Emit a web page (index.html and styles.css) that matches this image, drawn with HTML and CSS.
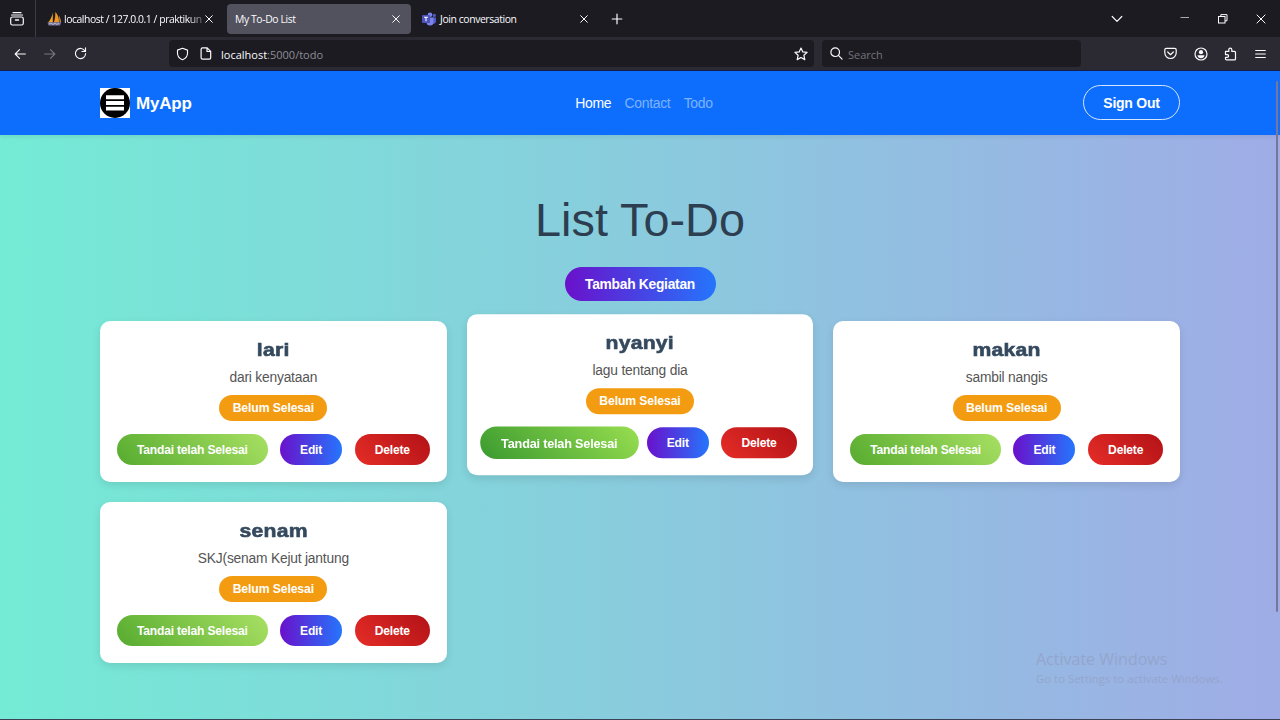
FILE: index.html
```html
<!DOCTYPE html>
<html lang="id">
<head>
<meta charset="utf-8">
<title>My To-Do List</title>
<link rel="stylesheet" href="styles.css">
</head>
<body>
<div class="tabbar">
  <div class="history"><svg class="ico" width="16" height="16" viewBox="0 0 16 16"><path d="M4 1.700h8M2.500 4h11"/><rect x="1.7" y="6" width="12.6" height="8" rx="1.8"/><path d="M6.500 9h3" stroke-width="1.5"/></svg></div>
  <div class="tab tab-first">
    <svg class="fav" width="15" height="14" viewBox="0 0 15 14"><path d="M5.800.5v10H1C3.600 8 5 4.500 5.800.5z" fill="#f5a623"/><path d="M8.200 0c2.800 2.500 4 6 3.800 10.500H6.800C8.200 6.500 8.500 3.500 8.200 0z" fill="#f0951c"/><path d="M12 3.500c1 2 1.800 4 2 7h-1.300z" fill="#d9a060"/><path d="M.5 10.200h13.700l-1.200 3.300H1.500z" fill="#77759b"/><path d="M2 12l2-1 2 1.500 2-1.500 2 1.500 2-1.500" fill="none" stroke="#c7c5dd" stroke-width=".8"/></svg>
    <span class="tab-title tab-fade">localhost / 127.0.0.1 / praktikun</span>
    <svg class="ico close" width="8" height="8" viewBox="0 0 8 8"><path d="M.7.7l6.600 6.600M7.300.7L.7 7.300"/></svg>
  </div>
  <div class="tab tab-active">
    <span class="tab-title">My To-Do List</span>
    <svg class="ico close" width="8" height="8" viewBox="0 0 8 8"><path d="M.7.7l6.600 6.600M7.300.7L.7 7.300"/></svg>
  </div>
  <div class="tab tab-teams">
    <svg class="fav" width="15" height="14" viewBox="0 0 15 14"><circle cx="8" cy="2.700" r="2.300" fill="#7b83eb"/><circle cx="12.300" cy="3.400" r="1.600" fill="#5059c9"/><path d="M10.500 5.500H14v4a2.500 2.500 0 0 1-3.500 2z" fill="#5059c9"/><path d="M4.500 5.500h7v4.500a3.500 3.500 0 0 1-7 0z" fill="#7b83eb"/><rect x="0" y="3" width="8" height="8" rx=".8" fill="#4b53bc"/><path d="M2 5.200h4M4 5.200V9.300" stroke="#fff" stroke-width="1.100"/></svg>
    <span class="tab-title">Join conversation</span>
    <svg class="ico close" width="8" height="8" viewBox="0 0 8 8"><path d="M.7.7l6.600 6.600M7.300.7L.7 7.300"/></svg>
  </div>
  <svg class="ico newtab" width="12" height="12" viewBox="0 0 12 12"><path d="M6 1.200v9.600M1.200 6h9.600"/></svg>
  <div class="window-controls">
    <svg class="ico" width="12" height="8" viewBox="0 0 12 8"><path d="M1.200 1.500L6 6.300l4.800-4.800"/></svg>
    <svg class="ico thin" width="10" height="10" viewBox="0 0 10 10"><path d="M.5 3.500h8.500" stroke="#aaa9af"/></svg>
    <svg class="ico thin" width="10" height="10" viewBox="0 0 10 10"><rect x=".5" y="2.500" width="6.500" height="6.500"/><path d="M2.800 2.500V.6h6.200v6.200H7"/></svg>
    <svg class="ico thin" width="10" height="10" viewBox="0 0 10 10"><path d="M.7.7l8.600 8.600M9.300.7L.7 9.300"/></svg>
  </div>
</div>
<div class="toolbar">
  <div class="nav-buttons">
    <svg class="ico" width="12" height="12" viewBox="0 0 13 12"><path d="M12.300 6H1.500M6 1.300L1.300 6 6 10.700"/></svg>
    <svg class="ico dim" width="12" height="12" viewBox="0 0 13 12"><path d="M.7 6h10.800M7 1.300L11.700 6 7 10.700"/></svg>
    <svg class="ico" width="13" height="13" viewBox="0 0 14 14"><path d="M11.900 4.500A5.500 5.500 0 1 0 12.500 7M12.400 1v3.900H8.500"/></svg>
  </div>
  <div class="urlbar">
    <svg class="ico" width="13" height="14" viewBox="0 0 14 14"><path d="M7 .9l5.400 1.900v3.400c0 3.300-2.300 5.700-5.400 7-3.100-1.300-5.400-3.700-5.400-7V2.800z"/></svg>
    <svg class="ico page" width="12" height="13" viewBox="0 0 12 13"><path d="M2.500.8h4.700l3.500 3.500v6.400a1.400 1.400 0 0 1-1.400 1.400H2.500a1.400 1.400 0 0 1-1.400-1.400V2.200A1.400 1.400 0 0 1 2.500.8zM7 1v3.500h3.600"/></svg>
    <span class="url"><b>localhost</b>:5000/todo</span>
    <svg class="ico star" width="14" height="14" viewBox="0 0 14 14"><path d="M7 1l1.800 3.900 4.300.5-3.200 2.900.9 4.300L7 10.500l-3.800 2.100.9-4.300L.9 5.400l4.300-.5z"/></svg>
  </div>
  <div class="searchbar">
    <svg class="ico" width="13" height="13" viewBox="0 0 13 13"><circle cx="5.200" cy="5.200" r="4.300"/><path d="M8.400 8.400l3.700 3.700"/></svg>
    <span>Search</span>
  </div>
  <div class="tools">
    <svg class="ico" width="13" height="13" viewBox="0 0 13 13"><path d="M2.300 1.300h8.400a1.500 1.500 0 0 1 1.500 1.500v3a5.700 5.700 0 0 1-11.400 0v-3a1.500 1.500 0 0 1 1.500-1.500zM3.700 5l2.800 2.700L9.300 5"/></svg>
    <svg class="ico" width="14" height="14" viewBox="0 0 14 14"><circle cx="7" cy="7" r="6"/><circle cx="7" cy="5.200" r="2.100" fill="#fbfbfe" stroke="none"/><path d="M3.400 8.200h7.200c-.4 2-1.800 3-3.600 3s-3.200-1-3.600-3z" fill="#fbfbfe" stroke="none"/></svg>
    <svg class="ico puzzle" width="13" height="14" viewBox="0 0 13 14"><path d="M1.500 6.300V4.400h3.300V2.600a1.500 1.500 0 0 1 3 0v1.800h2.700a1 1 0 0 1 1 1v6.500a1 1 0 0 1-1 1H2.500a1 1 0 0 1-1-1V10.400h1.700a1.400 1.400 0 0 0 0-2.800H1.500z"/></svg>
    <svg class="ico" width="11" height="10" viewBox="0 0 11 10"><path d="M.7 1.500h9.600M.7 5h9.600M.7 8.500h9.600"/></svg>
  </div>
</div>
<div class="page-view">
  <nav class="navbar">
    <div class="brand">
      <svg width="30" height="30" viewBox="0 0 30 30"><path d="M0 0h30v30H0z" fill="#fff"/><circle cx="15" cy="15" r="15"/><path d="M6 7.300h18v4H6zM6 13.100h18v4H6zM6 18.700h18v3.700H6z" fill="#fff"/></svg>
      <span>MyApp</span>
    </div>
    <div class="links"><a class="active">Home</a><a>Contact</a><a>Todo</a></div>
    <div class="account"><a class="signout">Sign Out</a></div>
  </nav>
  <main>
    <h1>List To-Do</h1>
    <a class="add">Tambah Kegiatan</a>
    <div class="grid">
      <article class="card">
        <h2>lari</h2><p>dari kenyataan</p><span class="badge">Belum Selesai</span>
        <div class="actions"><a class="btn done">Tandai telah Selesai</a><a class="btn edit">Edit</a><a class="btn delete">Delete</a></div>
      </article>
      <article class="card raised">
        <h2>nyanyi</h2><p>lagu tentang dia</p><span class="badge">Belum Selesai</span>
        <div class="actions"><a class="btn done hovered">Tandai telah Selesai</a><a class="btn edit">Edit</a><a class="btn delete">Delete</a></div>
      </article>
      <article class="card">
        <h2>makan</h2><p>sambil nangis</p><span class="badge">Belum Selesai</span>
        <div class="actions"><a class="btn done">Tandai telah Selesai</a><a class="btn edit">Edit</a><a class="btn delete">Delete</a></div>
      </article>
      <article class="card">
        <h2>senam</h2><p>SKJ(senam Kejut jantung</p><span class="badge">Belum Selesai</span>
        <div class="actions"><a class="btn done">Tandai telah Selesai</a><a class="btn edit">Edit</a><a class="btn delete">Delete</a></div>
      </article>
    </div>
  </main>
  <div class="scrollbar"></div>
  <div class="activate"><div class="activate-title">Activate Windows</div><div class="activate-sub">Go to Settings to activate Windows.</div></div>
</div>
</body>
</html>
```
FILE: styles.css
```css
* { box-sizing: border-box; }
body {
  margin: 0;
  width: 1280px;
  height: 720px;
  overflow: hidden;
  display: flex;
  flex-direction: column;
  font-family: "Liberation Sans", Arial, sans-serif;
}
svg { display: block; flex: none; }
.ico { fill: none; stroke: #fbfbfe; stroke-width: 1.2; stroke-linecap: round; stroke-linejoin: round; }
.ico.dim { stroke: #77767e; }
.ico.thin { stroke-width: 1; stroke-linecap: butt; stroke-linejoin: miter; }
.ico.close { margin-left: auto; stroke-width: 1; }

/* Browser tab strip */
.tabbar {
  height: 37px;
  flex: none;
  display: flex;
  align-items: center;
  background: #1c1b22;
  color: #fbfbfe;
  font: 10.4px "Open Sans", "Noto Sans", sans-serif;
  letter-spacing: -.4px;
}
.history {
  width: 36px;
  height: 37px;
  padding: 11px 0 0 9px;
  border-right: 1px solid #3d3c45;
}
.tab { height: 30px; display: flex; align-items: center; border-radius: 4px; white-space: nowrap; }
.tab-title { line-height: 14px; padding-top: 1px; }
.tab-first { width: 183px; margin-left: 3px; padding: 0 9px 0 8px; }
.tab-first .fav { margin-right: 2px; }
.tab-fade {
  letter-spacing: -.44px;
  -webkit-mask-image: linear-gradient(to right, #000 90%, rgba(0, 0, 0, .3));
  mask-image: linear-gradient(to right, #000 90%, rgba(0, 0, 0, .3));
}
.tab-active { width: 184px; margin-left: 5px; padding: 0 11px 0 8px; background: #52525e; }
.tab-teams { width: 184px; margin-left: 4px; padding: 0 11px 0 7px; }
.tab-teams .fav { margin-right: 3px; }
.newtab { margin-left: 11.500px; }
.window-controls { margin-left: auto; display: flex; align-items: center; padding-right: 14px; gap: 28px; }
.window-controls svg:first-child { margin-right: 29px; }

/* Browser toolbar */
.toolbar {
  height: 34px;
  flex: none;
  display: flex;
  align-items: center;
  background: #2b2a33;
  border-bottom: 1px solid #10204f;
  font: 11px "Open Sans", "Noto Sans", sans-serif;
}
.nav-buttons { width: 169px; padding-left: 14px; display: flex; align-items: center; gap: 18px; }
.urlbar {
  width: 645px;
  height: 27px;
  padding: 0 6px 0 7px;
  display: flex;
  align-items: center;
  background: #1c1b22;
  border-radius: 4px;
}
.page { margin-left: 11px; }
.url { margin-left: 9px; color: #8f8e95; padding-top: 1px; }
.url b { font-weight: 400; color: #fbfbfe; }
.star { margin-left: auto; }
.searchbar {
  width: 259px;
  height: 27px;
  margin-left: 8px;
  padding-left: 8px;
  display: flex;
  align-items: center;
  gap: 5px;
  background: #1c1b22;
  border-radius: 4px;
  color: #75747b;
}
.searchbar span { padding-top: 1px; }
.tools { margin-left: auto; padding-right: 14px; display: flex; align-items: center; gap: 17px; }
.puzzle { margin-left: -1px; margin-right: 1px; }

/* Page */
.page-view {
  position: relative;
  flex: 1;
  background: linear-gradient(to right, #74ebd5, #9face6);
  border-bottom: 1px solid #3b4256;
}
.navbar {
  height: 64px;
  padding: 0 100px;
  display: grid;
  grid-template-columns: 1fr auto 1fr;
  align-items: center;
  background: #0d6efd;
  box-shadow: 0 2px 4px rgba(0, 0, 0, .07);
}
.brand { display: flex; align-items: center; gap: 6px; color: #fff; font-size: 17px; letter-spacing: -.2px; font-weight: 700; }
.brand span { padding-top: 1px; }
.links { display: flex; gap: 13.3px; padding-left: 8px; font-size: 14px; letter-spacing: -.35px; color: #7db2fe; }
.links .active { color: #fff; }
.account { display: flex; justify-content: flex-end; padding-bottom: 1px; }
.signout {
  width: 97px;
  height: 35px;
  border: 1px solid #d5e6ff;
  border-radius: 18px;
  color: #fff;
  font-size: 14px;
  letter-spacing: -.25px;
  font-weight: 700;
  line-height: 34px;
  text-align: center;
}
main { padding: 57px 100px 0; display: flex; flex-direction: column; align-items: center; }
h1 { margin: 0 0 19px; font-size: 46.8px; line-height: 56px; font-weight: 400; color: #2c3e50; }
.add {
  width: 151px;
  height: 34px;
  border-radius: 17px;
  background: linear-gradient(to right, #6a11cb, #2575fc);
  color: #fff;
  font-size: 13.8px;
  letter-spacing: -.27px;
  font-weight: 700;
  line-height: 35px;
  text-align: center;
}
.grid { width: 100%; margin-top: 20px; display: grid; grid-template-columns: repeat(3, 1fr); gap: 20px; }
.card {
  height: 161px;
  padding-top: 17px;
  display: flex;
  flex-direction: column;
  align-items: center;
  background: #fff;
  border-radius: 10px;
  box-shadow: 0 3px 8px rgba(0, 0, 0, .1);
}
.raised { transform: translateY(-6.7px); }
h2 {
  margin: 0;
  font-size: 18.4px;
  line-height: 23px;
  font-weight: 700;
  color: #34495e;
  -webkit-text-stroke: .6px #34495e;
  letter-spacing: .2px;
  transform: scaleX(1.15);
}
p { margin: 7px 0; font-size: 13.8px; letter-spacing: -.2px; line-height: 20px; color: #555; }
.badge {
  width: 108px;
  height: 26px;
  border-radius: 13px;
  background: #f39c12;
  color: #fff;
  font-size: 12.2px;
  letter-spacing: -.1px;
  font-weight: 700;
  line-height: 26px;
  text-align: center;
}
.actions { margin-top: 13px; padding-left: .5px; display: flex; gap: 12.5px; }
.btn {
  height: 31px;
  border-radius: 16px;
  color: #fff;
  font-size: 12.1px;
  letter-spacing: -.2px;
  font-weight: 700;
  line-height: 32px;
  text-align: center;
  white-space: nowrap;
}
.done { width: 150.5px; background: linear-gradient(45deg, #56ab2f, #a8e063); }
.done.hovered { transform: scale(1.05); background: linear-gradient(45deg, #3a9a2f, #98de50); }
.edit { width: 62px; background: linear-gradient(to right, #6a11cb, #2575fc); }
.delete { width: 75.5px; background: linear-gradient(45deg, #e52d27, #b31217); }
.scrollbar { position: absolute; right: 2px; top: 10px; width: 2px; height: 531px; background: #74799b; border-radius: 1px; }
.activate { position: absolute; left: 1036px; top: 577px; color: #94a5cc; font-family: "Open Sans", "Noto Sans", sans-serif; white-space: nowrap; }
.activate-title { font-size: 16px; line-height: 22px; }
.activate-sub { font-size: 11.4px; line-height: 18px; }
```
